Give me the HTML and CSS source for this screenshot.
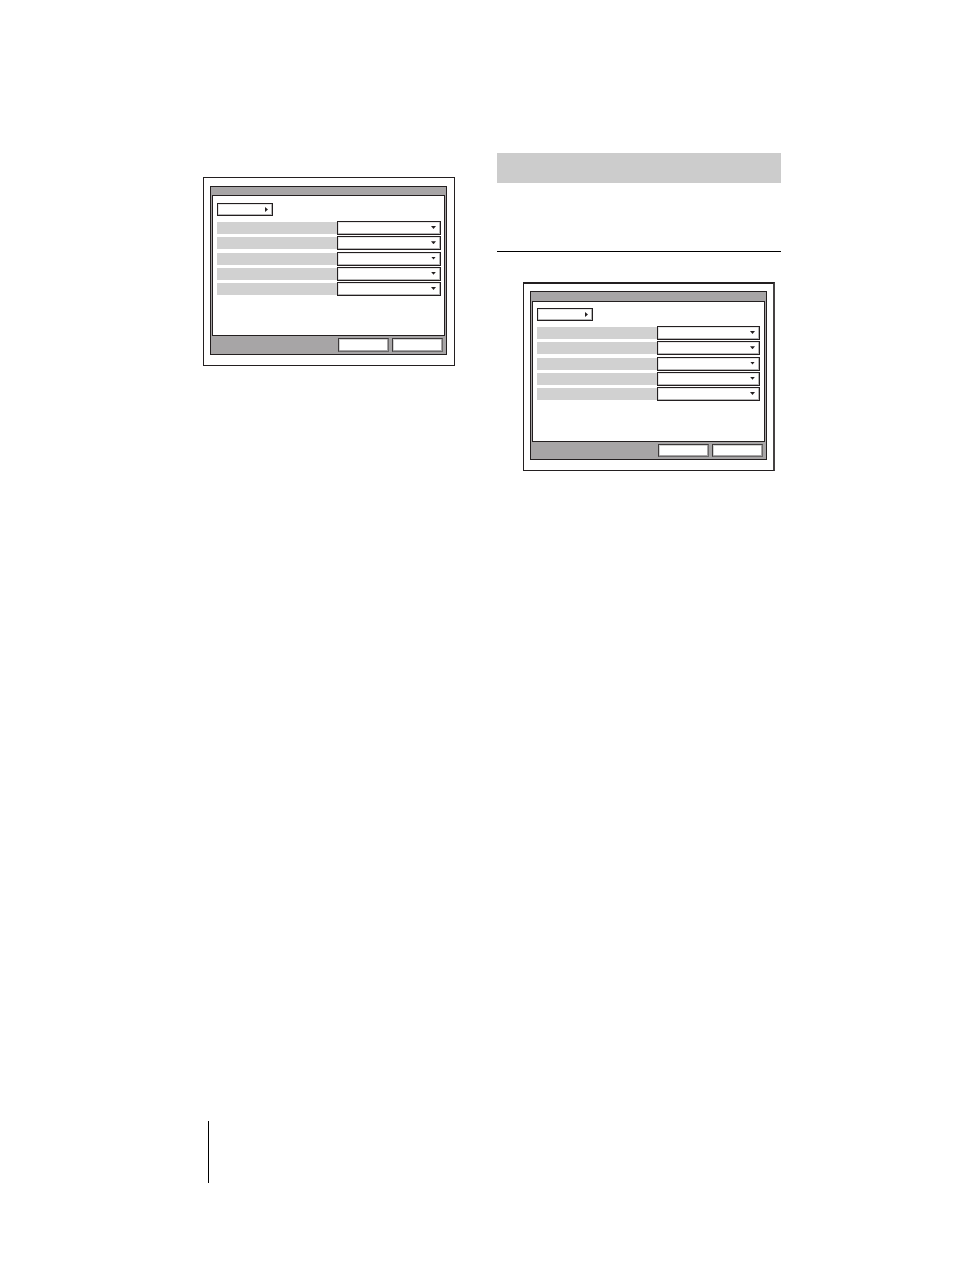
FILE: index.html
```html
<!DOCTYPE html>
<html lang="en">

<head>
    <meta charset="utf-8">
    <title>Setup menus</title>
    <link rel="stylesheet" href="styles.css">
</head>

<body>
    <main class="columns">
        <section class="column">
            <figure class="figure figure-first">
                <form class="menu">
                    <div class="title-bar"></div>
                    <div class="screen">
                        <button type="button" class="page-button" aria-label="Menu page"></button>
                        <div class="rows">
                            <div class="row">
                                <label class="name" for="a1"></label>
                                <div class="drop"><select id="a1" aria-label="Setting 1"></select></div>
                            </div>
                            <div class="row">
                                <label class="name" for="a2"></label>
                                <div class="drop"><select id="a2" aria-label="Setting 2"></select></div>
                            </div>
                            <div class="row">
                                <label class="name" for="a3"></label>
                                <div class="drop"><select id="a3" aria-label="Setting 3"></select></div>
                            </div>
                            <div class="row">
                                <label class="name" for="a4"></label>
                                <div class="drop"><select id="a4" aria-label="Setting 4"></select></div>
                            </div>
                            <div class="row">
                                <label class="name" for="a5"></label>
                                <div class="drop"><select id="a5" aria-label="Setting 5"></select></div>
                            </div>
                        </div>
                    </div>
                    <div class="actions">
                        <button type="button" aria-label="Save"></button>
                        <button type="button" aria-label="Cancel"></button>
                    </div>
                </form>
            </figure>
        </section>

        <section class="column">
            <div class="heading"></div>
            <div class="intro"></div>
            <figure class="figure figure-second">
                <form class="menu">
                    <div class="title-bar"></div>
                    <div class="screen">
                        <button type="button" class="page-button" aria-label="Menu page"></button>
                        <div class="rows">
                            <div class="row">
                                <label class="name" for="b1"></label>
                                <div class="drop"><select id="b1" aria-label="Setting 1"></select></div>
                            </div>
                            <div class="row">
                                <label class="name" for="b2"></label>
                                <div class="drop"><select id="b2" aria-label="Setting 2"></select></div>
                            </div>
                            <div class="row">
                                <label class="name" for="b3"></label>
                                <div class="drop"><select id="b3" aria-label="Setting 3"></select></div>
                            </div>
                            <div class="row">
                                <label class="name" for="b4"></label>
                                <div class="drop"><select id="b4" aria-label="Setting 4"></select></div>
                            </div>
                            <div class="row">
                                <label class="name" for="b5"></label>
                                <div class="drop"><select id="b5" aria-label="Setting 5"></select></div>
                            </div>
                        </div>
                    </div>
                    <div class="actions">
                        <button type="button" aria-label="Save"></button>
                        <button type="button" aria-label="Cancel"></button>
                    </div>
                </form>
            </figure>
        </section>
    </main>
    <footer class="page-footer"></footer>
</body>

</html>
```

FILE: styles.css
```css
* {
    box-sizing: border-box;
}

body {
    display: flex;
    flex-direction: column;
    justify-content: space-between;
    min-height: 100vh;
    margin: 0;
    padding: 153px 173px 86px 177px;
    background-color: white;
    font-family: "Liberation Sans", Arial, sans-serif;
}

.columns {
    display: grid;
    grid-template-columns: 1fr 1fr;
    gap: 36px;
}

.heading {
    height: 30px;
    background-color: #cccccc;
}

.intro {
    height: 69px;
    border-bottom: 1px solid black;
}

.figure {
    margin: 24px 6px 0 26px;
    padding: 8px 7px 10px 6px;
    border: 1px solid #231f20;
}

.figure-second {
    margin-top: 30px;
    padding: 7px 6px 10px 6px;
    border-top-width: 2px;
    border-right: 2px solid #454243;
}

.menu {
    border: 1px solid #231f20;
    background-color: #a7a5a6;
}

.title-bar {
    height: 8px;
}

.figure-second .title-bar {
    height: 9px;
}

.screen {
    margin: 0 1px;
    padding: 7px 3px 39px 4px;
    border: 1px solid #231f20;
    background-color: white;
}

.figure-second .screen {
    padding: 6px 4px 40px 4px;
}

button,
select {
    display: block;
    margin: 0;
    padding: 0;
    border: 1px solid #231f20;
    border-radius: 0;
    background-color: white;
    appearance: none;
}

.page-button {
    display: flex;
    align-items: center;
    justify-content: flex-end;
    width: 56px;
    height: 13px;
    padding-right: 4px;
    box-shadow: inset -1px -1px #b5b5b5, inset 1px 1px #e6e6e6;
}

/* small arrow pointing right */
.page-button::after {
    content: "";
    width: 3px;
    height: 5px;
    background-color: #231f20;
    clip-path: polygon(0 0, 100% 50%, 0 100%);
}

.rows {
    display: flex;
    flex-direction: column;
    justify-content: space-between;
    height: 75px;
    margin-top: 5px;
}

.row {
    display: flex;
    align-items: center;
}

.name {
    flex: 1;
    height: 12px;
    background-color: #d1d1d1;
}

.drop {
    position: relative;
    width: 104px;
}

.figure-second .drop {
    width: 103px;
}

.drop select {
    width: 100%;
    height: 14px;
    box-shadow: inset -1px -1px #b5b5b5, inset 1px 1px #e6e6e6;
}

.drop::after {
    content: "";
    position: absolute;
    top: 5px;
    right: 5px;
    width: 5px;
    height: 3px;
    background-color: #231f20;
    clip-path: polygon(0 0, 100% 0, 50% 100%);
    pointer-events: none;
}

.actions {
    display: flex;
    justify-content: flex-end;
    gap: 3px;
    padding: 2px 3px 2px 0;
}

.actions button {
    width: 51px;
    height: 14px;
    border-color: #3c393a #6a6869 #6a6869 #3c393a;
    box-shadow: inset -1px -1px #a7a5a6, inset 1px 1px #d1d1d1;
}

.figure-second .actions button {
    height: 13px;
}

.page-footer {
    height: 62px;
    margin-left: 31px;
    border-left: 1px solid black;
}
```
